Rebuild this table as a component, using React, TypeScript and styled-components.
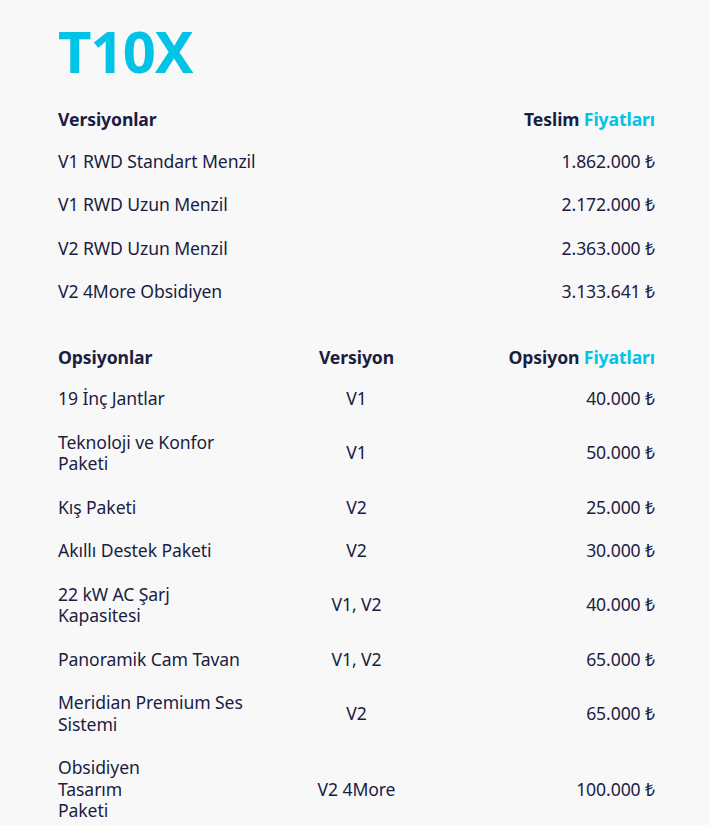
import React from "react";
import styled, { createGlobalStyle } from "styled-components";

const Global = createGlobalStyle`
  html, body { margin: 0; padding: 0; background: #f8f8f8; }
  body { font-family: "Noto Sans", "Open Sans", sans-serif; color: #1b1d42; }
`;

const Page = styled.main`
  padding: 14px 54px 0 58px;
  width: 597px;
`;

const Title = styled.h1`
  margin: 0 0 12px;
  font-size: 58px;
  line-height: 74px;
  font-weight: 700;
  color: #00c3e6;
  letter-spacing: -1px;
`;

const Table = styled.div<{ $cols: number }>`
  display: grid;
  grid-template-columns: ${(p) => (p.$cols === 3 ? "1fr 1fr 1fr" : "1fr 1fr")};
  margin-bottom: 24px;
`;

const Cell = styled.div<{ $align?: "left" | "center" | "right"; $head?: boolean }>`
  display: flex;
  align-items: center;
  justify-content: ${(p) =>
    p.$align === "right" ? "flex-end" : p.$align === "center" ? "center" : "flex-start"};
  text-align: ${(p) => p.$align ?? "left"};
  padding: ${(p) => (p.$head ? "9px 0" : "11px 0")};
  font-size: 17.6px;
  line-height: 21.5px;
  font-weight: ${(p) => (p.$head ? 700 : 400)};
  letter-spacing: -0.1px;
`;

const Accent = styled.span`
  color: #00c3e6;
`;

const versions: [string, string][] = [
  ["V1 RWD Standart Menzil", "1.862.000 ₺"],
  ["V1 RWD Uzun Menzil", "2.172.000 ₺"],
  ["V2 RWD Uzun Menzil", "2.363.000 ₺"],
  ["V2 4More Obsidiyen", "3.133.641 ₺"],
];

const options: [string[], string, string][] = [
  [["19 İnç Jantlar"], "V1", "40.000 ₺"],
  [["Teknoloji ve Konfor", "Paketi"], "V1", "50.000 ₺"],
  [["Kış Paketi"], "V2", "25.000 ₺"],
  [["Akıllı Destek Paketi"], "V2", "30.000 ₺"],
  [["22 kW AC Şarj", "Kapasitesi"], "V1, V2", "40.000 ₺"],
  [["Panoramik Cam Tavan"], "V1, V2", "65.000 ₺"],
  [["Meridian Premium Ses", "Sistemi"], "V2", "65.000 ₺"],
  [["Obsidiyen", "Tasarım", "Paketi"], "V2 4More", "100.000 ₺"],
];

const Lines = ({ lines }: { lines: string[] }) => (
  <span>
    {lines.map((l, i) => (
      <React.Fragment key={i}>
        {i > 0 && <br />}
        {l}
      </React.Fragment>
    ))}
  </span>
);

export default function App() {
  return (
    <>
      <Global />
      <Page>
        <Title>T10X</Title>
        <Table $cols={2}>
          <Cell $head>Versiyonlar</Cell>
          <Cell $head $align="right">
            <span>
              Teslim <Accent>Fiyatları</Accent>
            </span>
          </Cell>
          {versions.map(([n, p]) => (
            <React.Fragment key={n}>
              <Cell>{n}</Cell>
              <Cell $align="right">{p}</Cell>
            </React.Fragment>
          ))}
        </Table>
        <Table $cols={3}>
          <Cell $head>Opsiyonlar</Cell>
          <Cell $head $align="center">Versiyon</Cell>
          <Cell $head $align="right">
            <span>
              Opsiyon <Accent>Fiyatları</Accent>
            </span>
          </Cell>
          {options.map(([n, v, p], i) => (
            <React.Fragment key={i}>
              <Cell>
                <Lines lines={n} />
              </Cell>
              <Cell $align="center">{v}</Cell>
              <Cell $align="right">{p}</Cell>
            </React.Fragment>
          ))}
        </Table>
      </Page>
    </>
  );
}
